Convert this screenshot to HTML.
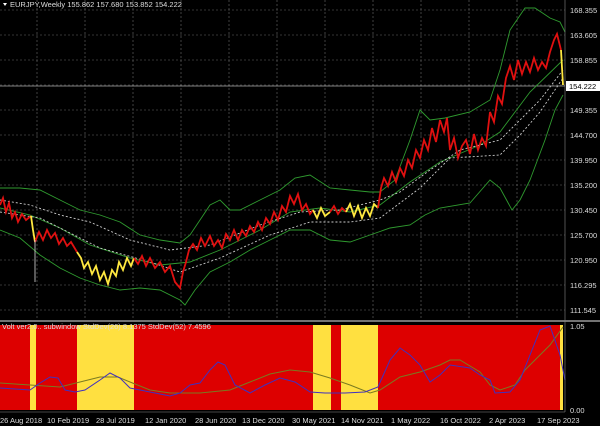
<!DOCTYPE html>
<html><head><style>
body{margin:0;background:#000;width:600px;height:426px;overflow:hidden;font-family:"Liberation Sans",sans-serif}
svg{display:block}
text{font-family:"Liberation Sans",sans-serif;font-size:7.5px;fill:#ddd}
</style></head><body>
<svg width="600" height="426" viewBox="0 0 600 426">
<rect width="600" height="426" fill="#000"/>
<g stroke="#6a6a6a" stroke-width="0.6" stroke-dasharray="2,2">
<path d="M0 10H565M0 35H565M0 60H565M0 85H565M0 110H565M0 135H565M0 160H565M0 185H565M0 210H565M0 235H565M0 260H565M0 285H565M0 310H565"/>
<path d="M37 0V320M85 0V320M133 0V320M181 0V320M229 0V320M277 0V320M325 0V320M373 0V320M421 0V320M469 0V320M517 0V320"/>
</g>
<path d="M0 86H565" stroke="#aaa" stroke-width="0.8"/>
<g fill="none" stroke-width="0.9">
<polyline stroke="#2f9a2f" points="0,188 20,188 40,190 60,200 80,210 100,215 120,222 140,235 160,240 180,243 190,235 200,220 210,205 220,200 230,210 240,210 260,200 280,190 295,178 310,175 330,188 350,190 370,192 380,192 395,180 410,140 420,110 430,120 445,118 470,112 490,100 500,70 510,30 525,8 535,8 550,18 560,22 565,32"/>
<polyline stroke="#2f9a2f" points="0,208 30,215 60,228 90,245 130,258 160,265 190,262 220,250 260,230 290,212 320,208 350,212 380,205 410,182 440,162 480,145 500,132 530,92 563,60"/>
<polyline stroke="#2f9a2f" points="0,230 20,238 40,255 60,268 80,278 100,285 120,290 140,288 160,290 180,300 185,305 195,290 210,272 230,262 250,250 270,240 290,230 310,230 330,240 350,242 370,235 390,228 410,225 425,215 440,208 470,203 490,180 500,188 512,210 520,200 530,180 545,140 555,110 563,95"/>
<polyline stroke="#ccc" stroke-dasharray="2,2" points="0,212 40,218 100,248 150,262 180,272 220,258 270,235 310,222 350,222 380,218 420,188 450,158 500,155 520,135 540,112 563,78"/>
<polyline stroke="#ccc" stroke-dasharray="2,2" points="0,200 30,205 60,215 90,222 130,240 170,250 210,245 260,225 300,212 340,210 380,200 400,192 430,170 460,150 500,140 540,100 563,70"/>
</g>
<g fill="none" stroke-width="1.8" stroke-linejoin="miter">
<polyline stroke="#e01010" points="0,205 3,198 6,212 9,203 12,218 15,212 18,222 22,214 26,220 31,216"/>
<polyline stroke="#ffe840" points="31,216 33,230 35,242"/>
<polyline stroke="#e01010" points="35,242 39,232 43,240 47,230 51,238 55,233 59,244 63,238 67,246 71,242 77,252"/>
<polyline stroke="#ffe840" points="77,252 81,258 84,268 88,262 92,274 96,266 100,280 104,272 108,284 112,270 116,276 119,262 123,270 127,258 131,266 134,258"/>
<polyline stroke="#e01010" points="134,258 138,264 142,256 146,266 150,258 155,268 160,262 165,272 170,266 175,282 180,288 183,272 186,262 189,250 193,244 197,250 201,238 205,246 210,236 214,246 218,240 222,248 226,234 230,240 234,230 238,240 242,230 246,236 250,226 254,232 258,222 262,230 266,218 270,224 274,212 278,220 282,206 286,212 290,196 294,204 298,194 302,210 306,204 310,214 313,210"/>
<polyline stroke="#ffe840" points="313,210 317,218 321,208 325,216 330,212"/>
<polyline stroke="#e01010" points="330,212 334,206 338,214 342,208 346,212"/>
<polyline stroke="#ffe840" points="346,212 350,204 354,216 358,206 362,218 366,208 370,216 374,204 378,208"/>
<polyline stroke="#e01010" points="378,208 381,188 384,178 388,186 392,172 396,182 400,168 404,176 408,160 412,168 416,150 420,158 424,140 428,150 432,128 436,142 440,120 444,132 447,118 450,150 454,138 458,158 462,146 466,140 470,154 474,134 478,150 482,138 486,146 490,112 494,122 498,96 502,104 506,78 510,66 514,80 518,60 522,74 526,62 530,72 534,58 538,70 542,62 546,68 550,52 554,40 557,34 561,50"/>
<polyline stroke="#ffe840" points="561,50 563,85"/>
</g>
<path d="M35 240V282" stroke="#ddd" stroke-width="0.8"/>
<path d="M0 321H600" stroke="#999" stroke-width="1.5"/>
<rect x="0" y="325" width="563" height="85" fill="#dd0000"/>
<g fill="#ffe040">
<rect x="30" y="325" width="6" height="85"/><rect x="77" y="325" width="57" height="85"/>
<rect x="313" y="325" width="18" height="85"/><rect x="341" y="325" width="37" height="85"/>
<rect x="560" y="325" width="3" height="85"/>
</g>
<g fill="none" stroke-width="1">
<polyline stroke="#7a7a20" points="0,383 30,385 60,387 80,382 100,377 118,377 130,382 150,390 170,393 200,393 230,390 250,382 270,374 290,370 310,372 330,378 350,385 370,393 380,390 400,377 420,372 440,365 450,360 460,360 480,372 490,385 500,390 515,385 525,370 540,355 550,345 563,327"/>
<polyline stroke="#4030c0" points="0,388 30,390 40,383 50,377 58,378 65,390 75,392 85,390 100,380 110,373 120,378 130,388 150,392 170,396 180,393 190,385 200,383 210,370 218,362 225,365 235,385 250,393 265,385 280,378 295,382 310,392 325,393 345,393 365,392 378,387 390,360 400,348 410,355 420,365 430,382 440,375 450,365 470,368 480,375 490,380 495,393 510,392 520,380 530,355 540,330 550,326 560,355 565,380"/>
</g>
<text x="2" y="329" fill="#fff">Volt ver2.0.. subwindow  StdDev(26) 8.1375  StdDev(52) 7.4596</text>
<path d="M565 0V412M0 412H565" stroke="#888" stroke-width="0.6"/>
<path d="M3 3L7 3L5 6Z" fill="#fff"/>
<text x="10" y="7">EURJPY,Weekly  155.862 157.680 153.852 154.222</text>
<g>
<text x="570" y="13">168.355</text><text x="570" y="38">163.605</text><text x="570" y="63">158.855</text>
<text x="570" y="113">149.355</text><text x="570" y="138">144.700</text><text x="570" y="163">139.950</text>
<text x="570" y="188">135.200</text><text x="570" y="213">130.450</text><text x="570" y="238">125.700</text>
<text x="570" y="263">120.950</text><text x="570" y="288">116.295</text><text x="570" y="313">111.545</text>
<text x="570" y="329">1.05</text><text x="570" y="413">0.00</text>
</g>
<rect x="566" y="81" width="34" height="10" fill="#fff"/>
<text x="569" y="89" style="fill:#000">154.222</text>
<g>
<text x="0" y="423">26 Aug 2018</text><text x="47" y="423">10 Feb 2019</text><text x="96" y="423">28 Jul 2019</text>
<text x="145" y="423">12 Jan 2020</text><text x="195" y="423">28 Jun 2020</text><text x="242" y="423">13 Dec 2020</text>
<text x="292" y="423">30 May 2021</text><text x="341" y="423">14 Nov 2021</text><text x="391" y="423">1 May 2022</text>
<text x="440" y="423">16 Oct 2022</text><text x="489" y="423">2 Apr 2023</text><text x="537" y="423">17 Sep 2023</text>
</g>
</svg>
</body></html>
